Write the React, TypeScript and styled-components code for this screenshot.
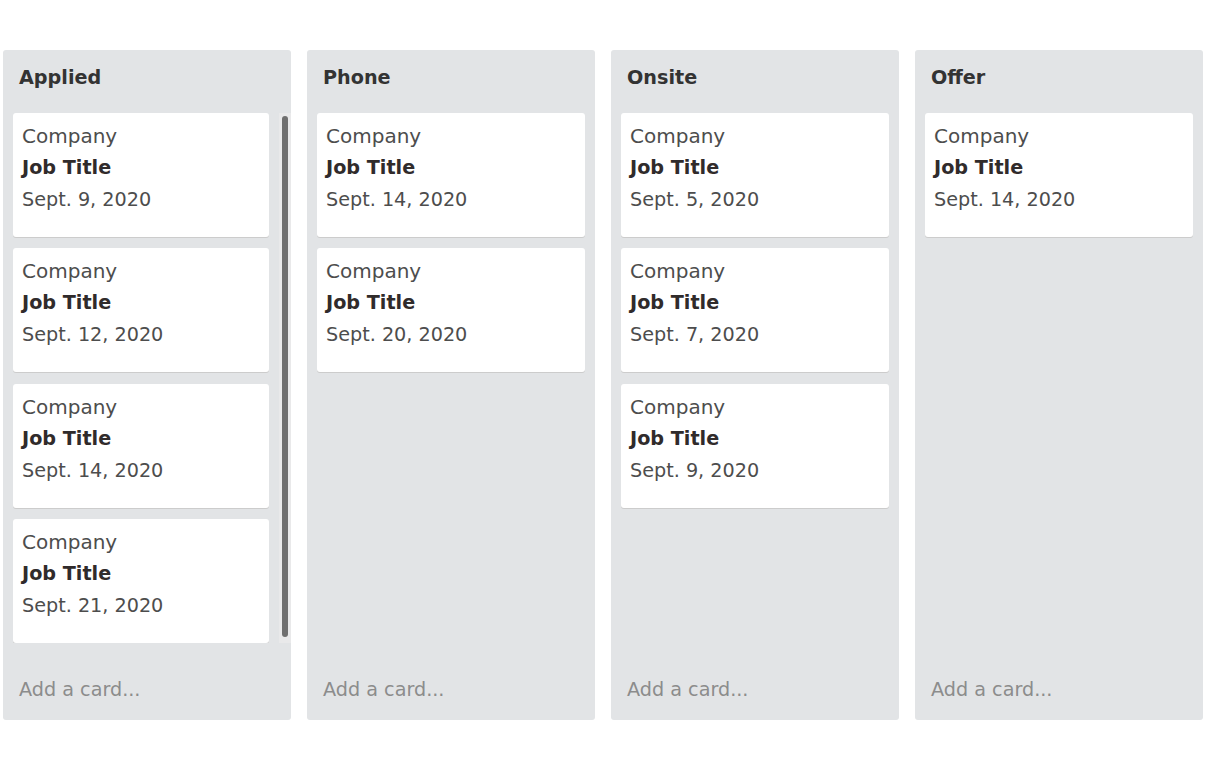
import React from "react";
import styled, { createGlobalStyle } from "styled-components";

const Global = createGlobalStyle`
  html, body { margin: 0; padding: 0; background: #ffffff; }
  body { font-family: "DejaVu Sans", "Liberation Sans", sans-serif; }
  * { box-sizing: border-box; }
`;

const Board = styled.div`
  display: flex;
  justify-content: center;
  gap: 16px;
  padding-top: 50px;
`;

const Column = styled.section`
  width: 288px;
  height: 670px;
  background: #e2e4e6;
  border-radius: 3px;
  display: flex;
  flex-direction: column;
`;

const Header = styled.h2`
  margin: 0;
  padding: 17px 16px 24px;
  font-size: 19.2px;
  line-height: 22px;
  font-weight: bold;
  color: #333333;
`;

const Body = styled.div`
  flex: 1;
  min-height: 0;
  display: flex;
`;

const List = styled.div`
  flex: 1;
  min-width: 0;
  overflow: hidden;
  padding: 0 10px;
  display: flex;
  flex-direction: column;
  gap: 11.33px;
`;

const ScrollTrack = styled.div`
  flex: none;
  width: 12px;
  background: #e9e9ea;
  padding: 3px 3px 6px;
  display: flex;
`;

const ScrollThumb = styled.div`
  flex: 1;
  background: #6f6f6f;
  border-radius: 3px;
`;

const Card = styled.div`
  flex: none;
  background: #ffffff;
  border-radius: 3px;
  box-shadow: 0 1px 0 #cccccc;
  height: 124px;
  padding: 8px 9px 21px;
`;

const Company = styled.div`
  font-size: 20px;
  line-height: 31px;
  color: #4d4d4d;
  white-space: nowrap;
`;

const Title = styled.div`
  font-size: 19.2px;
  line-height: 32px;
  font-weight: bold;
  color: #302b2b;
  white-space: nowrap;
`;

const DateLine = styled.div`
  font-size: 19.2px;
  line-height: 32px;
  color: #4d4d4d;
  white-space: nowrap;
`;

const Footer = styled.div`
  padding: 36px 16px 19px;
  font-size: 19.2px;
  line-height: 22px;
  color: #8c8c8c;
`;

type Job = { company: string; title: string; date: string };

const columns: { name: string; scroll?: boolean; jobs: Job[] }[] = [
  {
    name: "Applied",
    scroll: true,
    jobs: [
      { company: "Company", title: "Job Title", date: "Sept. 9, 2020" },
      { company: "Company", title: "Job Title", date: "Sept. 12, 2020" },
      { company: "Company", title: "Job Title", date: "Sept. 14, 2020" },
      { company: "Company", title: "Job Title", date: "Sept. 21, 2020" },
    ],
  },
  {
    name: "Phone",
    jobs: [
      { company: "Company", title: "Job Title", date: "Sept. 14, 2020" },
      { company: "Company", title: "Job Title", date: "Sept. 20, 2020" },
    ],
  },
  {
    name: "Onsite",
    jobs: [
      { company: "Company", title: "Job Title", date: "Sept. 5, 2020" },
      { company: "Company", title: "Job Title", date: "Sept. 7, 2020" },
      { company: "Company", title: "Job Title", date: "Sept. 9, 2020" },
    ],
  },
  {
    name: "Offer",
    jobs: [{ company: "Company", title: "Job Title", date: "Sept. 14, 2020" }],
  },
];

export default function App() {
  return (
    <>
      <Global />
      <Board>
        {columns.map((col) => (
          <Column key={col.name}>
            <Header>{col.name}</Header>
            <Body>
              <List>
                {col.jobs.map((j, i) => (
                  <Card key={i}>
                    <Company>{j.company}</Company>
                    <Title>{j.title}</Title>
                    <DateLine>{j.date}</DateLine>
                  </Card>
                ))}
              </List>
              {col.scroll && (
                <ScrollTrack>
                  <ScrollThumb />
                </ScrollTrack>
              )}
            </Body>
            <Footer>Add a card...</Footer>
          </Column>
        ))}
      </Board>
    </>
  );
}
